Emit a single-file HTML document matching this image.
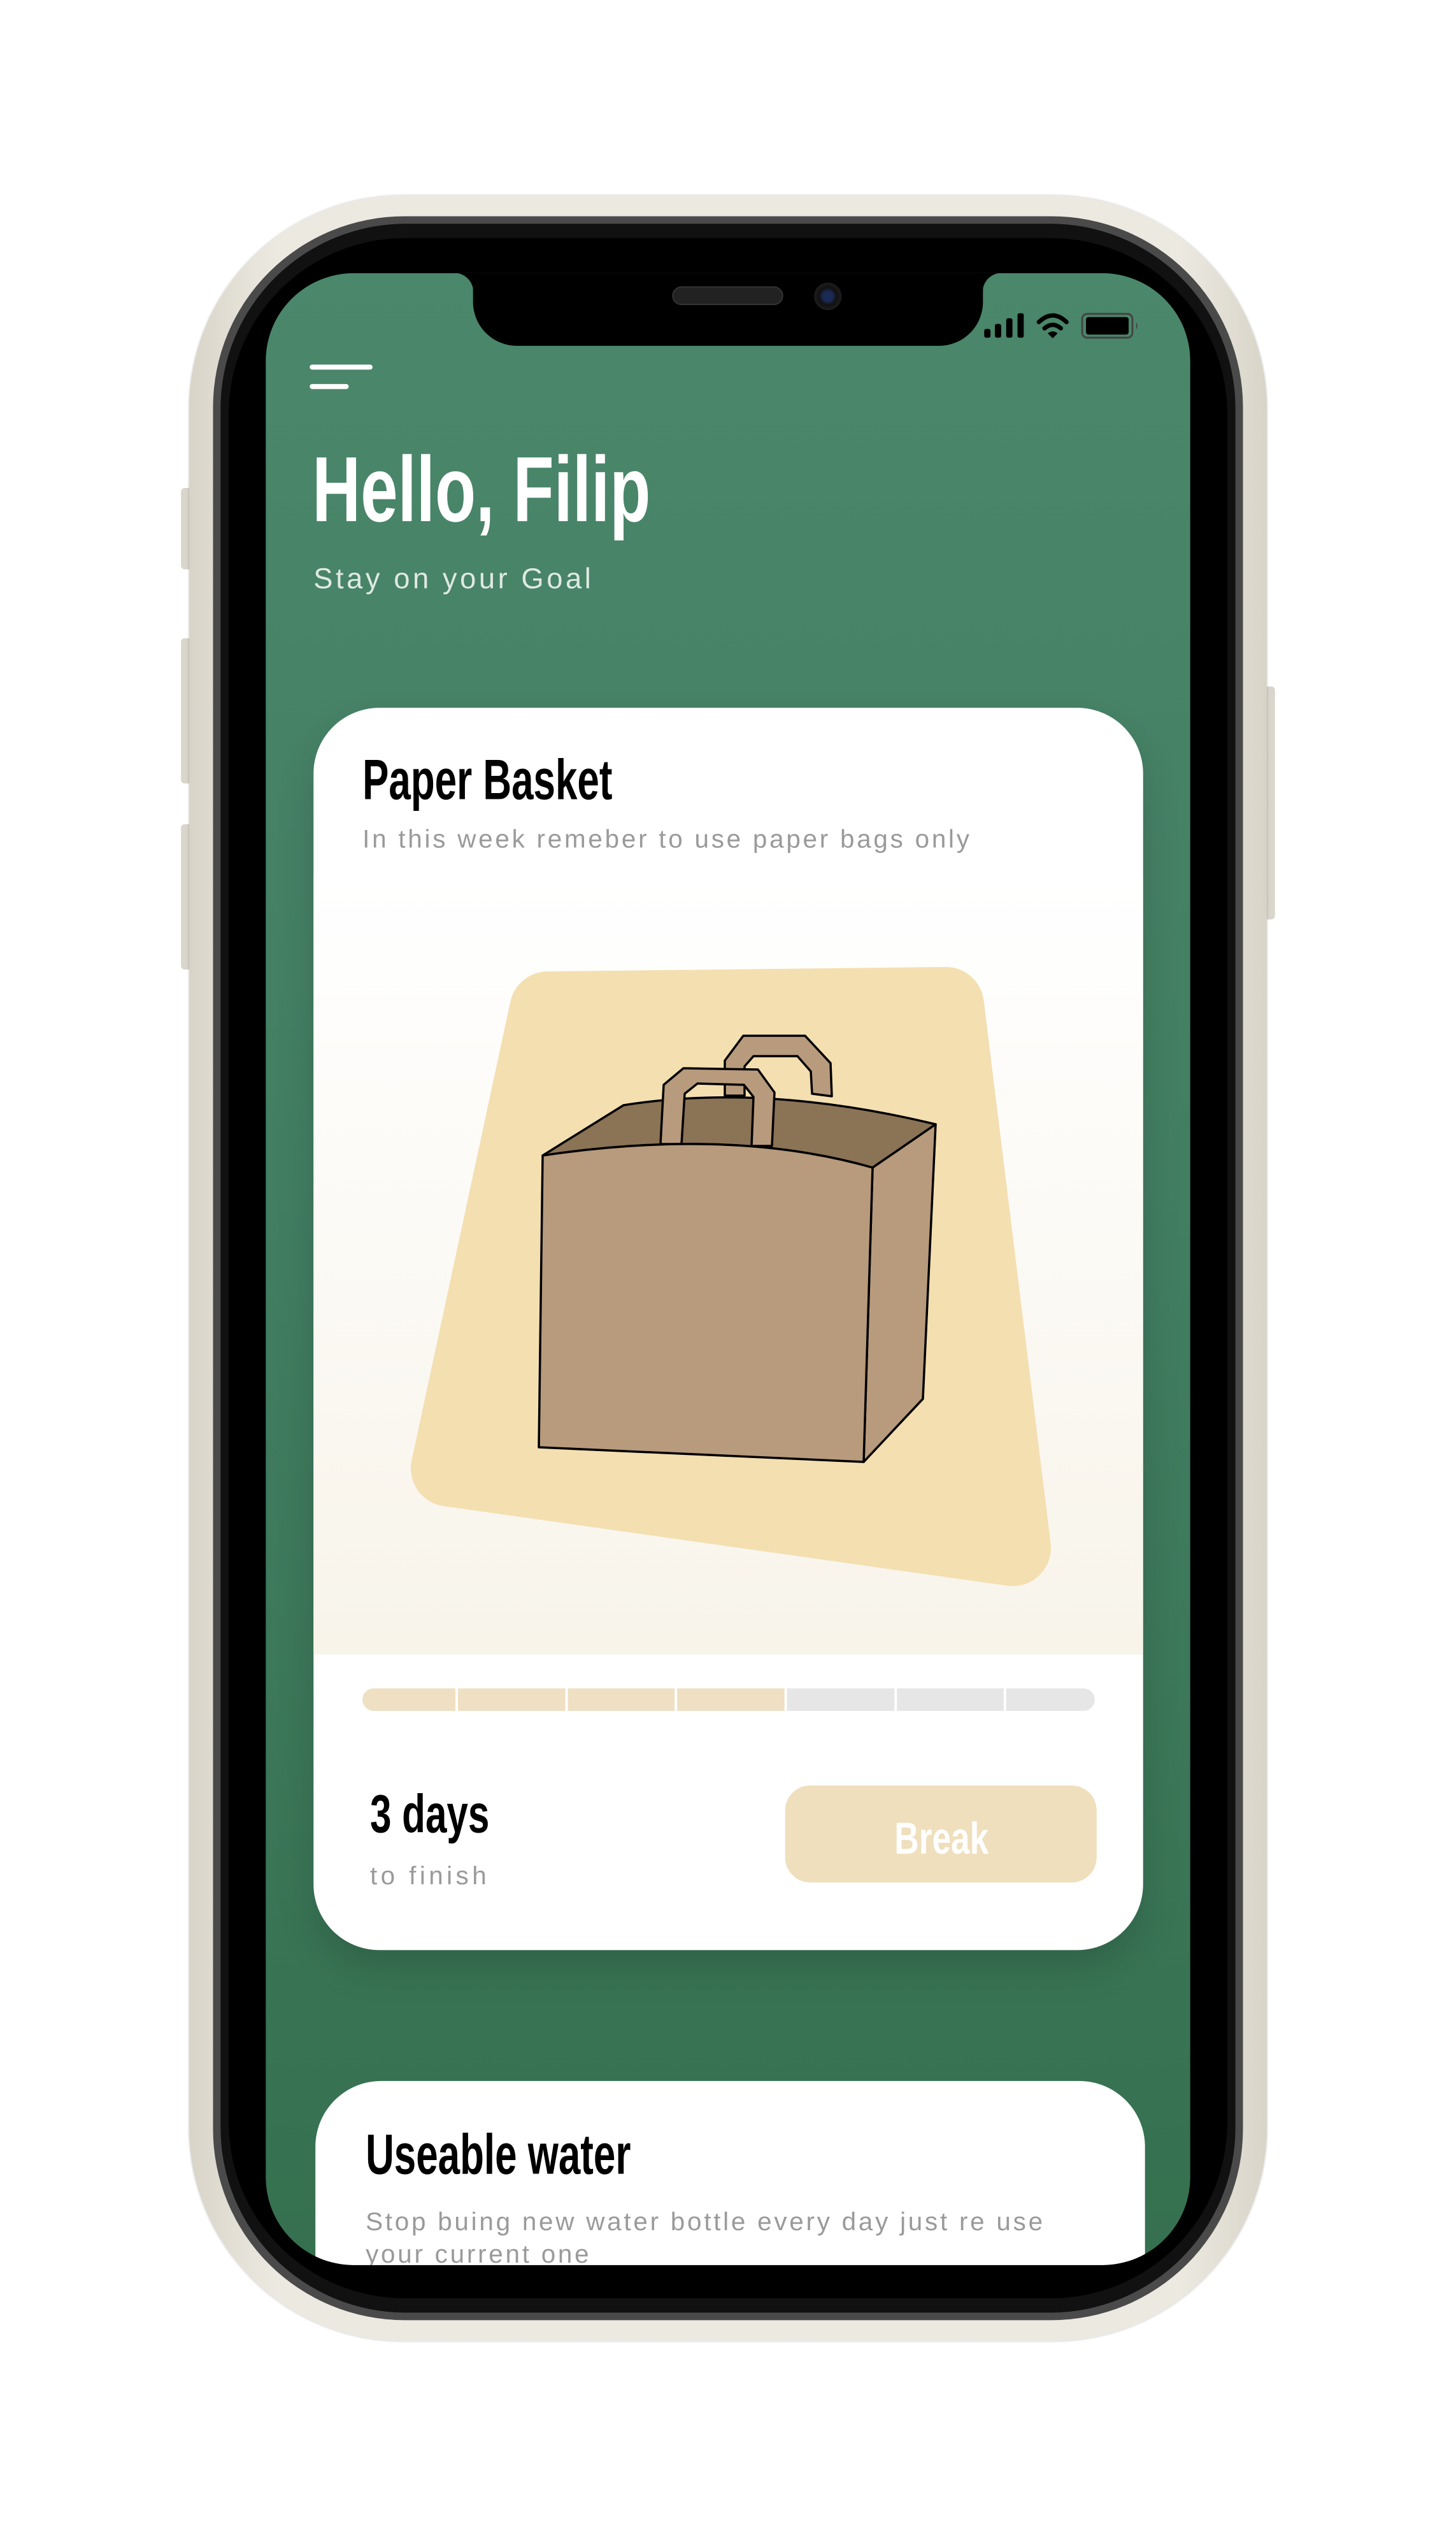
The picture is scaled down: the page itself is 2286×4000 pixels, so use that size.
<!DOCTYPE html>
<html><head><meta charset="utf-8"><style>
*{margin:0;padding:0;box-sizing:border-box}
body{width:2286px;height:4000px;background:#fff;position:relative;overflow:hidden;font-family:"Liberation Sans",sans-serif}
#w{position:absolute;left:0;top:0;width:2286px;height:4000px;transform:scale(.986,.983);transform-origin:297px 307px}
.abs{position:absolute}
.cond{font-weight:bold;transform-origin:left top;white-space:nowrap;display:inline-block}
.gray{color:#9a9a9a;white-space:nowrap}
</style></head><body><div id="w">
<div class="abs" style="left:284px;top:774px;width:18px;height:130px;background:#d9d6cc;border-radius:6px"></div>
<div class="abs" style="left:284px;top:1014px;width:18px;height:232px;background:#d9d6cc;border-radius:6px"></div>
<div class="abs" style="left:284px;top:1311px;width:18px;height:232px;background:#d9d6cc;border-radius:6px"></div>
<div class="abs" style="left:2008px;top:1091px;width:18px;height:372px;background:#d9d6cc;border-radius:6px"></div>
<div class="abs" style="left:297px;top:307px;width:1716px;height:3426px;border-radius:340px;background:linear-gradient(90deg,#d8d4c8,#ece9e1 8%,#ece9e1 92%,#d8d4c8);box-shadow:0 0 4px rgba(0,0,0,.25)"></div>
<div class="abs" style="left:335px;top:340px;width:1640px;height:3360px;border-radius:305px;background:#4a4a4a"></div>
<div class="abs" style="left:347px;top:352px;width:1616px;height:3336px;border-radius:295px;background:#111"></div>
<div class="abs" style="left:360px;top:375px;width:1590px;height:3290px;border-radius:280px;background:#000"></div>
<div class="abs" style="left:419px;top:431px;width:1472px;height:3181px;border-radius:140px;overflow:hidden;background:linear-gradient(180deg,#4b876b 0%,#417d61 50%,#35704f 100%)">
  <div class="abs" style="left:330px;top:-10px;width:812px;height:126px;background:#000;border-radius:0 0 70px 70px"></div>
  <div class="abs" style="left:300px;top:-10px;width:40px;height:40px;background:radial-gradient(circle at 0 100%,transparent 30px,#000 31px)"></div>
  <div class="abs" style="left:1132px;top:-10px;width:40px;height:40px;background:radial-gradient(circle at 100% 100%,transparent 30px,#000 31px)"></div>
  <div class="abs" style="left:647px;top:21px;width:177px;height:30px;border-radius:15px;background:#222;border:2px solid #333"></div>
  <div class="abs" style="left:873px;top:15px;width:44px;height:44px;border-radius:50%;background:radial-gradient(circle,#1a2a55 25%,#111 45%,#1d1d1d 70%)"></div>
  <svg class="abs" style="left:1140px;top:60px" width="270" height="60" viewBox="1559 491 270 60">
    <rect x="1563" y="520" width="10" height="14" rx="3"/>
    <rect x="1580" y="512" width="10" height="22" rx="3"/>
    <rect x="1598" y="503" width="10" height="31" rx="3"/>
    <rect x="1616" y="495" width="10" height="39" rx="3"/>
    <path d="M1650 509 Q1672 488 1694 509" fill="none" stroke="#000" stroke-width="7" stroke-linecap="round"/>
    <path d="M1659 519 Q1672 508 1685 519" fill="none" stroke="#000" stroke-width="7" stroke-linecap="round"/>
    <path d="M1664 527 L1672 535 L1680 527 Q1672 521 1664 527Z"/>
    <rect x="1719" y="496" width="80" height="38" rx="8" fill="none" stroke="#444" stroke-width="3"/>
    <rect x="1725" y="501" width="68" height="28" rx="4"/>
    <path d="M1805 509 Q1809 515 1805 521Z" fill="#444"/>
  </svg>
  <div class="abs" style="left:70px;top:146px;width:100px;height:8px;border-radius:4px;background:#fff"></div>
  <div class="abs" style="left:70px;top:177px;width:62px;height:8px;border-radius:4px;background:#fff"></div>
  <div class="abs cond" style="left:74px;top:272px;font-size:148px;line-height:1;color:#fff;transform:scaleX(.72)">Hello, Filip</div>
  <div class="abs" style="left:76px;top:460px;font-size:46px;color:#dfe9e2;letter-spacing:4.6px;white-space:nowrap">Stay on your Goal</div>
  <div class="abs" style="left:76px;top:694px;width:1321px;height:1984px;border-radius:105px;background:#fff;overflow:hidden;box-shadow:0 30px 60px rgba(0,0,0,.15)">
    <div class="abs" style="left:0;top:270px;width:1321px;height:1242px;background:linear-gradient(180deg,#fff,#f8f4ea)"></div>
    <div class="abs cond" style="left:78px;top:70px;font-size:91px;line-height:1;color:#000;transform:scaleX(.69)">Paper Basket</div>
    <div class="abs gray" style="left:78px;top:186px;font-size:41px;letter-spacing:3.8px">In this week remeber to use paper bags only</div>
    <div class="abs" style="left:78px;top:1566px;width:1166px;height:36px;border-radius:18px;background:#e6e6e6;overflow:hidden">
      <div class="abs" style="left:0;top:0;width:672px;height:36px;background:#efe0c3"></div>
      <div class="abs" style="left:148px;top:0;width:4px;height:36px;background:#fff"></div>
      <div class="abs" style="left:323px;top:0;width:4px;height:36px;background:#fff"></div>
      <div class="abs" style="left:497px;top:0;width:4px;height:36px;background:#fff"></div>
      <div class="abs" style="left:672px;top:0;width:4px;height:36px;background:#fff"></div>
      <div class="abs" style="left:847px;top:0;width:4px;height:36px;background:#fff"></div>
      <div class="abs" style="left:1021px;top:0;width:4px;height:36px;background:#fff"></div>
    </div>
    <div class="abs cond" style="left:90px;top:1724px;font-size:86px;line-height:1;color:#000;transform:scaleX(.71)">3 days</div>
    <div class="abs gray" style="left:90px;top:1842px;font-size:41px;letter-spacing:5.5px">to finish</div>
    <div class="abs" style="left:751px;top:1721px;width:496px;height:155px;border-radius:40px;background:#efdfbd"></div>
    <div class="abs cond" style="left:925px;top:1770px;font-size:72px;line-height:1;color:#fff;transform:scaleX(.75)">Break</div>
  </div>
  <div class="abs" style="left:79px;top:2887px;width:1321px;height:600px;border-radius:105px;background:#fff">
    <div class="abs cond" style="left:80px;top:72px;font-size:91px;line-height:1;color:#000;transform:scaleX(.69)">Useable water</div>
    <div class="abs gray" style="left:80px;top:198px;font-size:41px;letter-spacing:3.8px;line-height:52px">Stop buing new water bottle every day just re use<br>your current one</div>
  </div>
</div>
</div>
<svg class="abs" style="left:0;top:0" width="2286" height="4000" viewBox="0 0 2286 4000">
  <path d="M860 1585 L1485 1578 L1590 2430 L705 2305Z" fill="#f4dfb1" stroke="#f4dfb1" stroke-width="120" stroke-linejoin="round"/>
  <g stroke="#000" stroke-width="3.5" stroke-linejoin="round">
    <path d="M1138 1665 L1167 1626 L1264 1626 L1304 1669 L1306 1721 L1275 1717 L1273 1682 L1252 1658 L1183 1658 L1169 1674 L1169 1720 L1138 1720Z" fill="#b89b7c"/>
    <path d="M852 1814 L979 1735 Q1200 1700 1469 1765 L1370 1833 Q1150 1770 852 1814Z" fill="#8b7355"/>
    <path d="M1037 1796 L1042 1703 L1073 1677 L1190 1679 L1216 1715 L1212 1799 L1180 1799 L1183 1722 L1168 1703 L1095 1701 L1075 1717 L1070 1796Z" fill="#b89b7c"/>
    <path d="M1370 1833 L1469 1765 L1449 2196 L1356 2295Z" fill="#b89b7c"/>
    <path d="M852 1814 Q1150 1770 1370 1833 L1356 2295 L846 2272Z" fill="#b89b7c"/>
  </g>
</svg>
</body></html>
